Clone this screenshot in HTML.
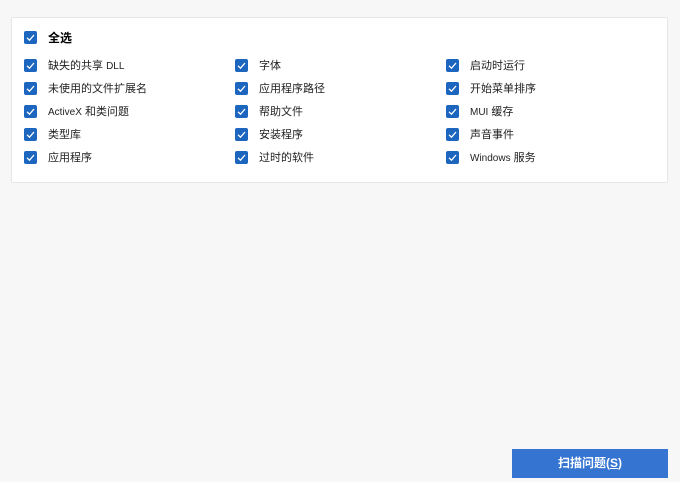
<!DOCTYPE html>
<html><head><meta charset="utf-8"><style>
body{margin:0;width:680px;height:482px;background:#f7f7f7;font-family:"Liberation Sans","Noto Sans CJK SC",sans-serif;position:relative;overflow:hidden}
.card{position:absolute;left:11px;top:17px;width:655px;height:164px;background:#fff;border:1px solid #e6e6e6;border-radius:2px}
.cb{position:absolute;width:13px;height:13px;background:#1d66c0;border-radius:2px}
.cb svg{position:absolute;left:0;top:0}
.t{position:absolute;font-size:11px;color:#222;line-height:14px}
.t span{font-size:10px}
.btn{position:absolute;left:512px;top:449px;width:156px;height:29px;background:#3574d1;color:#fff;font-size:12px;font-weight:bold;text-align:center;line-height:29px}
</style></head><body>
<div class="card"></div>
<div id="c"></div>
<div class="btn">扫描问题(<u>S</u>)</div>
<script>
var items=[["全选",24,37,1],
["缺失的共享 <span>DLL</span>",24,65],["字体",235,65],["启动时运行",446,65],
["未使用的文件扩展名",24,88],["应用程序路径",235,88],["开始菜单排序",446,88],
["<span>ActiveX</span> 和类问题",24,111],["帮助文件",235,111],["<span>MUI</span> 缓存",446,111],
["类型库",24,134],["安装程序",235,134],["声音事件",446,134],
["应用程序",24,157],["过时的软件",235,157],["<span>Windows</span> 服务",446,157]];
var h="";
items.forEach(function(i){
h+='<div class="cb" style="left:'+i[1]+'px;top:'+(i[2]-6)+'px"><svg width="13" height="13"><path d="M3 6.8 L5.5 9.2 L10 4" stroke="#fff" stroke-width="1.3" fill="none"/></svg></div>';
h+='<div class="t" style="left:'+(i[1]+24)+'px;top:'+(i[2]-6)+'px;'+(i[3]?'font-weight:bold;font-size:12px;color:#000':'')+'">'+i[0]+'</div>';
});
document.getElementById("c").innerHTML=h;
</script>
</body></html>
